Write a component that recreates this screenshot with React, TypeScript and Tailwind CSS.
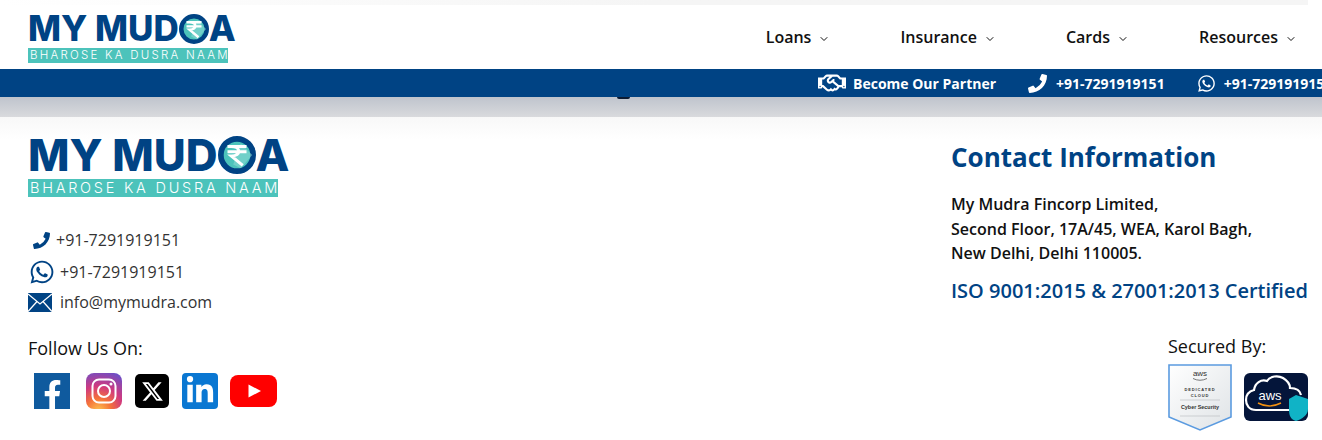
import React from 'react';
import { ChevronDown } from 'lucide-react';
import { FaPhoneAlt, FaWhatsapp, FaFacebookF, FaLinkedinIn, FaRegHandshake } from 'react-icons/fa';
import { FaXTwitter } from 'react-icons/fa6';

const NAV = ['Loans', 'Insurance', 'Cards', 'Resources'];

const RupeeCoin = ({ size }: { size: number }) => (
  <svg width={size} height={size} viewBox="0 0 40 40" className="shrink-0">
    <circle cx="20" cy="20" r="17" fill="#4cc3bb" stroke="#004384" strokeWidth="6" />
    <path d="M24 8 L36 20 L24 34 L16 30 Z" fill="#8ad8d2" opacity="0.6" />
    <path d="M10 11 H30 M10 16.5 H30 M14 11 C24 11 25 21 14 21 L26 31" fill="none" stroke="#fff" strokeWidth="3.2" />
  </svg>
);

const Logo = ({ big }: { big?: boolean }) => (
  <div className={big ? 'w-[250px]' : 'w-[200px]'}>
    <div
      className={
        big
          ? "flex items-center justify-between h-[36px] font-['Inter',sans-serif] font-extrabold text-[44px] leading-none text-[#004384]"
          : "flex items-center justify-between h-[29px] font-['Inter',sans-serif] font-extrabold text-[35px] leading-none text-[#004384]"
      }
    >
      <span className="flex items-center">
        <span>MY&nbsp;MUD</span>
        <RupeeCoin size={big ? 38 : 30} />
      </span>
      <span>A</span>
    </div>
    <div
      className={
        big
          ? "mt-[6px] h-[18px] bg-[#4cc3bb] text-white font-['Inter',sans-serif] font-light text-[14.5px] leading-[18px] tracking-[2.75px] whitespace-nowrap overflow-hidden pl-[2px]"
          : "mt-[5px] h-[15px] bg-[#4cc3bb] text-white font-['Inter',sans-serif] font-light text-[11.5px] leading-[15px] tracking-[2.25px] whitespace-nowrap overflow-hidden pl-[2px]"
      }
    >
      BHAROSE KA DUSRA NAAM
    </div>
  </div>
);

const Envelope = () => (
  <svg width="24" height="19" viewBox="0 0 24 19" className="shrink-0">
    <rect width="24" height="19" fill="#004384" />
    <path d="M0 1 L12 11 L24 1 M0 18.5 L9 8.5 M24 18.5 L15 8.5" fill="none" stroke="#fff" strokeWidth="1.3" />
  </svg>
);

const Instagram = () => (
  <svg width="36" height="36" viewBox="0 0 36 36">
    <defs>
      <radialGradient id="ig" cx="0.35" cy="1.05" r="1.15">
        <stop offset="0" stopColor="#fdc34f" />
        <stop offset="0.3" stopColor="#f5733a" />
        <stop offset="0.6" stopColor="#d0397f" />
        <stop offset="1" stopColor="#6a4fc8" />
      </radialGradient>
    </defs>
    <rect width="36" height="36" rx="8" fill="url(#ig)" />
    <rect x="6.5" y="6.5" width="23" height="23" rx="6.5" fill="none" stroke="#fff" strokeWidth="2" />
    <circle cx="18" cy="18" r="6" fill="none" stroke="#fff" strokeWidth="2" />
    <circle cx="25" cy="11" r="1.5" fill="#fff" />
  </svg>
);

const Youtube = () => (
  <svg width="47" height="32" viewBox="0 0 47 32">
    <rect width="47" height="32" rx="8" fill="#ff0000" />
    <path d="M18.5 9.5 L31 16 L18.5 22.5 Z" fill="#fff" />
  </svg>
);

const AwsBadge = () => (
  <svg width="64" height="67" viewBox="0 0 64 67" className="shrink-0">
    <defs>
      <linearGradient id="badge" x1="0" y1="0" x2="1" y2="1">
        <stop offset="0" stopColor="#ffffff" />
        <stop offset="1" stopColor="#dfe3e6" />
      </linearGradient>
    </defs>
    <path d="M1 1 H63 V53 L32 66 L1 53 Z" fill="url(#badge)" stroke="#5b9be0" strokeWidth="1.6" />
    <text x="32" y="12" textAnchor="middle" fontFamily="Liberation Sans, sans-serif" fontSize="8" fill="#333">aws</text>
    <path d="M25 14.5 Q32 18 39 14.5" fill="none" stroke="#555" strokeWidth="0.8" />
    <text x="32" y="27" textAnchor="middle" fontFamily="Liberation Sans, sans-serif" fontSize="4" fontWeight="700" letterSpacing="0.9" fill="#333">DEDICATED</text>
    <text x="32" y="32.5" textAnchor="middle" fontFamily="Liberation Sans, sans-serif" fontSize="4" fontWeight="700" letterSpacing="0.9" fill="#333">CLOUD</text>
    <path d="M12 36 H52 M12 52 H52" stroke="#b5b9bd" strokeWidth="0.6" />
    <text x="32" y="45" textAnchor="middle" fontFamily="Liberation Sans, sans-serif" fontSize="5.4" fontWeight="700" fill="#333">Cyber Security</text>
  </svg>
);

const AwsCloud = () => (
  <svg width="64" height="48" viewBox="0 0 64 48" className="shrink-0">
    <rect width="64" height="48" rx="6" fill="#04153a" />
    <path
      d="M46 37 H12 C5 37 2 32 2 27 C2 21 6 18 10 17 C11 10 17 6 23 8 C26 3 34 2 39 5 C44 8 46 12 46 15 C51 15 56 17 57 22"
      fill="none"
      stroke="#fff"
      strokeWidth="2.2"
    />
    <text x="26" y="27" textAnchor="middle" fontFamily="Liberation Sans, sans-serif" fontSize="13" fill="#fff">aws</text>
    <path d="M14 30 Q25 36 37 30" fill="none" stroke="#f29111" strokeWidth="1.5" />
    <path d="M52 22 L64 26 V36 C64 42 58 46 52 48 C46 46 45 42 45 36 V26 Z" fill="#10b3c6" />
  </svg>
);

export default function App() {
  return (
    <div className="relative w-[1322px] h-[440px] overflow-hidden bg-white font-['Open_Sans',sans-serif]">
      <div className="h-[5px] bg-gradient-to-r from-white via-[#f5f5f5] to-[#f5f5f5] mr-[14px]" />

      <header className="flex justify-between h-[64px] pl-[28px] pr-[25px] pt-[9px]">
        <Logo />
        <nav className="flex items-center gap-[70px] h-[46px]">
          {NAV.map((item) => (
            <div key={item} className="flex items-center gap-[7px] text-[16px] font-semibold text-[#111]">
              {item}
              <ChevronDown size={12} strokeWidth={2} className="mt-[3px]" />
            </div>
          ))}
        </nav>
      </header>

      <div className="flex items-center h-[28px] bg-[#004384] pl-[818px] text-white text-[14px] font-bold whitespace-nowrap">
        <FaRegHandshake size={28} className="shrink-0" />
        <span className="ml-[7px]">Become Our Partner</span>
        <FaPhoneAlt size={19} className="shrink-0 ml-[32px] -scale-x-100" />
        <span className="ml-[9px]">+91-7291919151</span>
        <FaWhatsapp size={19} className="shrink-0 ml-[32px]" />
        <span className="ml-[8px]">+91-7291919151</span>
      </div>

      <div className="absolute left-[617px] top-[97px] w-[13px] h-[2px] rounded-b-full bg-[#0b1b33]" />
      <div className="h-[20px] bg-gradient-to-b from-[#bfc4cd] to-[#d9dadd]" />

      <footer className="flex justify-between h-[323px] bg-gradient-to-b from-[#f8f8f8] to-white to-[7%] pl-[28px]">
        <div className="w-[300px] pt-[20px]">
          <Logo big />
          <div className="mt-[32px] text-[16px] font-medium text-[#333]">
            <div className="flex items-center h-[22px] pl-[5px]">
              <FaPhoneAlt size={17} className="shrink-0 -scale-x-100 text-[#004384]" />
              <span className="ml-[6px]">+91-7291919151</span>
            </div>
            <div className="flex items-center h-[26px] mt-[8px] pl-[1px]">
              <FaWhatsapp size={26} className="shrink-0 text-[#004384]" />
              <span className="ml-[5px]">+91-7291919151</span>
            </div>
            <div className="flex items-center h-[20px] mt-[7px]">
              <Envelope />
              <span className="ml-[8px]">info@mymudra.com</span>
            </div>
          </div>
          <div className="mt-[24px] text-[18px] leading-[24px] font-medium text-[#111]">Follow Us On:</div>
          <div className="flex items-center mt-[13px] pl-[6px]">
            <div className="flex items-end justify-center w-[36px] h-[36px] bg-[#0f5a9e] text-white">
              <FaFacebookF size={29} />
            </div>
            <div className="ml-[16px] h-[36px]">
              <Instagram />
            </div>
            <div className="flex items-center justify-center ml-[13px] w-[34px] h-[34px] rounded-[5px] bg-black text-white">
              <FaXTwitter size={23} />
            </div>
            <div className="flex items-center justify-center ml-[13px] w-[36px] h-[36px] rounded-[4px] bg-[#0a77d2] text-white">
              <FaLinkedinIn size={30} />
            </div>
            <div className="ml-[12px] h-[32px]">
              <Youtube />
            </div>
          </div>
        </div>

        <div className="w-[371px] pt-[22px]">
          <h3 className="text-[26px] leading-[36px] font-bold text-[#004384]">Contact Information</h3>
          <p className="mt-[17px] text-[16px] leading-[24.5px] font-semibold text-[#111]">
            My Mudra Fincorp Limited,
            <br />
            Second Floor, 17A/45, WEA, Karol Bagh,
            <br />
            New Delhi, Delhi 110005.
          </p>
          <div className="mt-[11px] text-[20px] leading-[28px] font-semibold text-[#004384] whitespace-nowrap">
            ISO 9001:2015 &amp; 27001:2013 Certified
          </div>
          <div className="mt-[29px] ml-[217px] w-[140px]">
            <div className="text-[18px] leading-[24px] font-medium text-[#111]">Secured By:</div>
            <div className="flex items-center justify-between mt-[6px]">
              <AwsBadge />
              <AwsCloud />
            </div>
          </div>
        </div>
      </footer>
    </div>
  );
}
